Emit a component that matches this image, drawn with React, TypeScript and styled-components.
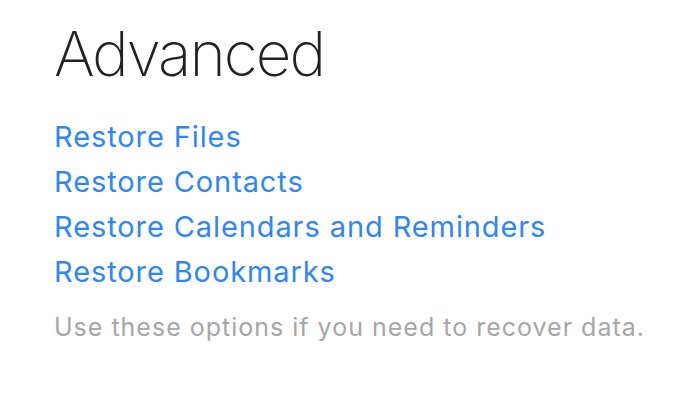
import React from "react";
import styled, { createGlobalStyle } from "styled-components";

const Global = createGlobalStyle`
  html, body { margin: 0; padding: 0; background: #ffffff; }
  body { font-family: Inter, "Liberation Sans", sans-serif; }
`;

const Panel = styled.section`
  display: flex;
  flex-direction: column;
  padding: 18px 0 0 54px;
  width: 700px;
  height: 396px;
  box-sizing: border-box;
`;

const Title = styled.h1`
  margin: 0;
  font-family: Inter, "Liberation Sans", sans-serif;
  font-weight: 250;
  font-size: 62px;
  line-height: 72px;
  color: #222224;
  letter-spacing: -2px;
`;

const LinkList = styled.ul`
  list-style: none;
  margin: 24px 0 0 0;
  padding: 0;
  display: flex;
  flex-direction: column;
`;

const LinkItem = styled.li`
  font-size: 29px;
  line-height: 45px;
  font-weight: 400;
  letter-spacing: 0.9px;
  color: #2f86f6;
`;

const Note = styled.p`
  margin: 18px 0 0 0;
  font-size: 25px;
  line-height: 30px;
  letter-spacing: 1px;
  color: #a6a6a8;
`;

const links = [
  "Restore Files",
  "Restore Contacts",
  "Restore Calendars and Reminders",
  "Restore Bookmarks",
];

export default function App() {
  return (
    <>
      <Global />
      <Panel>
        <Title>Advanced</Title>
        <LinkList>
          {links.map((l) => (
            <LinkItem key={l}>{l}</LinkItem>
          ))}
        </LinkList>
        <Note>Use these options if you need to recover data.</Note>
      </Panel>
    </>
  );
}
